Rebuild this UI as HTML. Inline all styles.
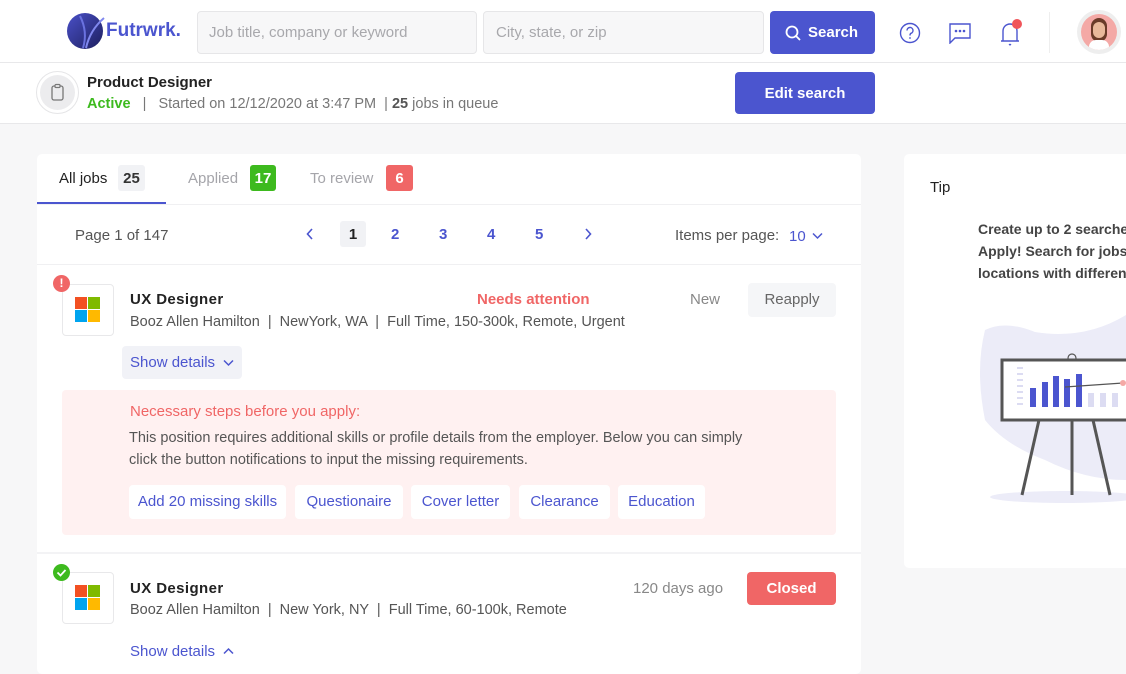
<!DOCTYPE html>
<html><head><meta charset="utf-8"><style>
*{margin:0;padding:0;box-sizing:border-box}
body{width:1126px;height:659px;overflow:hidden;background:#f7f7f8;font-family:"Liberation Sans",sans-serif;position:relative;color:#333}
.a{position:absolute}
.blue{color:#4b55cf}
.t{white-space:nowrap}
</style></head><body>
<div class="a" style="left:0;top:0;width:1126px;height:124px;background:#fff"></div>
<div class="a" style="left:0;top:62px;width:1126px;height:1px;background:#e8e8ea"></div>
<div class="a" style="left:0;top:123px;width:1126px;height:1px;background:#e8e8ea"></div>
<svg class="a" style="left:66px;top:12px" width="40" height="38" viewBox="0 0 40 38"><defs><linearGradient id="g" x1="0" y1="0" x2="1" y2="1"><stop offset="0" stop-color="#4a50c8"/><stop offset="1" stop-color="#1d1f5e"/></linearGradient></defs><circle cx="19" cy="19" r="18" fill="url(#g)"/><path d="M14 4 Q22 20 17 36" stroke="#6a72e0" stroke-width="2" fill="none"/><path d="M38 6 Q24 18 20 36" stroke="#8088ee" stroke-width="2" fill="none"/></svg>
<div class="a t" style="left:106px;top:20px;font-size:19px;font-weight:bold;color:#4b55cf">Futrwrk.</div>
<div class="a" style="left:197px;top:11px;width:280px;height:43px;background:#f7f7f8;border:1px solid #e6e6e8;border-radius:4px"></div>
<div class="a t" style="left:209px;top:24px;font-size:15px;color:#a8a8ac">Job title, company or keyword</div>
<div class="a" style="left:483px;top:11px;width:281px;height:43px;background:#f7f7f8;border:1px solid #e6e6e8;border-radius:4px"></div>
<div class="a t" style="left:496px;top:24px;font-size:15px;color:#a8a8ac">City, state, or zip</div>
<div class="a" style="left:770px;top:11px;width:105px;height:43px;background:#4b55cf;border-radius:4px"></div>
<svg class="a" style="left:785px;top:25px" width="17" height="17" viewBox="0 0 17 17"><circle cx="7" cy="7" r="5.5" stroke="#fff" stroke-width="1.8" fill="none"/><path d="M11 11l4 4" stroke="#fff" stroke-width="1.8"/></svg>
<div class="a t" style="left:808px;top:24px;font-size:15px;color:#fff;font-weight:bold">Search</div>
<svg class="a" style="left:899px;top:22px" width="22" height="22" viewBox="0 0 22 22"><circle cx="11" cy="11" r="9.5" stroke="#4b55cf" stroke-width="1.4" fill="none"/><path d="M8 8.5a3 3 0 1 1 4 2.8c-1 .4-1 1-1 2.2" stroke="#4b55cf" stroke-width="1.4" fill="none"/><circle cx="11" cy="16" r=".9" fill="#4b55cf"/></svg>
<svg class="a" style="left:949px;top:23px" width="22" height="21" viewBox="0 0 22 21"><path d="M1 1h20v14H6l-5 5z" stroke="#4b55cf" stroke-width="1.4" fill="none"/><circle cx="7" cy="8" r="1.3" fill="#4b55cf"/><circle cx="11" cy="8" r="1.3" fill="#4b55cf"/><circle cx="15" cy="8" r="1.3" fill="#4b55cf"/></svg>
<svg class="a" style="left:998px;top:17px" width="26" height="30" viewBox="0 0 26 30"><path d="M3 24h18M5 24V14a7 7 0 0 1 14 0v10" stroke="#4b55cf" stroke-width="1.4" fill="none"/><path d="M11 27l1 1 1-1" stroke="#4b55cf" stroke-width="1.2" fill="none"/><circle cx="19" cy="7" r="5" fill="#f0555a"/></svg>
<div class="a" style="left:1049px;top:12px;width:1px;height:41px;background:#eee"></div>
<div class="a" style="left:1077px;top:10px;width:44px;height:44px;border-radius:50%;background:#eee"></div>
<div class="a" style="left:1081px;top:14px;width:36px;height:36px;border-radius:50%;background:#f4a9a6;overflow:hidden"><div class="a" style="left:10px;top:4px;width:16px;height:24px;border-radius:8px;background:#6a3a28"></div><div class="a" style="left:12px;top:8px;width:12px;height:16px;border-radius:6px;background:#e9b89a"></div><div class="a" style="left:8px;top:26px;width:20px;height:14px;border-radius:8px;background:#fff"></div></div>
<div class="a" style="left:36px;top:71px;width:43px;height:43px;border-radius:50%;border:1px solid #e5e5e7;background:#fff"></div>
<div class="a" style="left:40px;top:75px;width:35px;height:35px;border-radius:50%;background:#ececee"></div>
<svg class="a" style="left:49px;top:83px" width="17" height="19" viewBox="0 0 17 19"><rect x="3" y="3" width="11" height="14" rx="2" stroke="#777" stroke-width="1.3" fill="none"/><rect x="6" y="1.5" width="5" height="3" rx="1" stroke="#777" stroke-width="1.2" fill="#ececee"/></svg>
<div class="a t" style="left:87px;top:74px;font-size:15px;color:#222;font-weight:bold">Product Designer</div>
<div class="a t" style="left:87px;top:96px;font-size:14.5px;color:#777"><span style="color:#3dba1e;font-weight:bold">Active</span>&nbsp;&nbsp; | &nbsp;&nbsp;Started on 12/12/2020 at 3:47 PM&nbsp; | <b style="color:#555">25</b> jobs in queue</div>
<div class="a" style="left:735px;top:72px;width:140px;height:42px;background:#4b55cf;border-radius:4px"></div>
<div class="a t" style="left:735px;top:85px;width:140px;text-align:center;font-size:15px;color:#fff;font-weight:bold">Edit search</div>
<div class="a" style="left:37px;top:154px;width:824px;height:520px;background:#fff;border-radius:5px"></div>
<div class="a t" style="left:59px;top:170px;font-size:15px;color:#222">All jobs</div>
<div class="a" style="left:118px;top:165px;width:27px;height:26px;background:#f1f2f5;border-radius:3px;font-size:15px;font-weight:bold;text-align:center;line-height:28px;color:#333">25</div>
<div class="a" style="left:37px;top:202px;width:129px;height:2px;background:#4b55cf"></div>
<div class="a" style="left:37px;top:204px;width:824px;height:1px;background:#f0f0f2"></div>
<div class="a t" style="left:188px;top:170px;font-size:15px;color:#a5a5aa">Applied</div>
<div class="a" style="left:250px;top:165px;width:26px;height:26px;background:#3dba1e;border-radius:3px;font-size:15px;font-weight:bold;text-align:center;line-height:28px;color:#fff">17</div>
<div class="a t" style="left:310px;top:170px;font-size:15px;color:#a5a5aa">To review</div>
<div class="a" style="left:386px;top:165px;width:27px;height:26px;background:#f06666;border-radius:3px;font-size:15px;font-weight:bold;text-align:center;line-height:28px;color:#fff">6</div>
<div class="a t" style="left:75px;top:227px;font-size:15px;color:#555">Page 1 of 147</div>
<svg class="a" style="left:306px;top:228px" width="8" height="12" viewBox="0 0 8 12"><path d="M6 1L1.5 6 6 11" stroke="#4b55cf" stroke-width="1.6" fill="none"/></svg>
<div class="a" style="left:340px;top:221px;width:26px;height:26px;background:#f1f2f5;border-radius:3px;text-align:center;line-height:27px;font-size:15px;font-weight:bold;color:#222">1</div>
<div class="a t blue" style="left:391px;top:226px;font-size:15px;font-weight:bold">2</div>
<div class="a t blue" style="left:439px;top:226px;font-size:15px;font-weight:bold">3</div>
<div class="a t blue" style="left:487px;top:226px;font-size:15px;font-weight:bold">4</div>
<div class="a t blue" style="left:535px;top:226px;font-size:15px;font-weight:bold">5</div>
<svg class="a" style="left:584px;top:228px" width="8" height="12" viewBox="0 0 8 12"><path d="M2 1l4.5 5L2 11" stroke="#4b55cf" stroke-width="1.6" fill="none"/></svg>
<div class="a t" style="left:675px;top:227px;font-size:15px;color:#555">Items per page:</div>
<div class="a t blue" style="left:789px;top:228px;font-size:15px">10</div>
<svg class="a" style="left:812px;top:232px" width="11" height="8" viewBox="0 0 11 8"><path d="M1 1.5l4.5 4.5 4.5-4.5" stroke="#4b55cf" stroke-width="1.5" fill="none"/></svg>
<div class="a" style="left:37px;top:264px;width:824px;height:1px;background:#f0f0f2"></div>
<div class="a" style="left:62px;top:284px;width:52px;height:52px;border:1px solid #e8e8ea;border-radius:4px;background:#fff"></div>
<div class="a" style="left:75px;top:297px;width:12px;height:12px;background:#f25022"></div><div class="a" style="left:88px;top:297px;width:12px;height:12px;background:#7fba00"></div><div class="a" style="left:75px;top:310px;width:12px;height:12px;background:#00a4ef"></div><div class="a" style="left:88px;top:310px;width:12px;height:12px;background:#ffb900"></div>
<div class="a" style="left:53px;top:275px;width:17px;height:17px;border-radius:50%;background:#f06666;color:#fff;font-size:12px;font-weight:bold;text-align:center;line-height:17px">!</div>
<div class="a t" style="left:130px;top:291px;font-size:15px;color:#222;font-weight:bold;letter-spacing:.4px">UX Designer</div>
<div class="a t" style="left:130px;top:314px;font-size:14.5px;color:#555">Booz Allen Hamilton &nbsp;| &nbsp;NewYork, WA &nbsp;| &nbsp;Full Time, 150-300k, Remote, Urgent</div>
<div class="a t" style="left:477px;top:291px;font-size:15px;color:#f06666;font-weight:bold">Needs attention</div>
<div class="a t" style="left:690px;top:291px;font-size:15px;color:#888">New</div>
<div class="a" style="left:748px;top:283px;width:88px;height:34px;background:#f5f6f8;border-radius:4px;text-align:center;line-height:34px;font-size:15px;color:#666">Reapply</div>
<div class="a" style="left:122px;top:346px;width:120px;height:33px;background:#f1f2f7;border-radius:4px"></div>
<div class="a t blue" style="left:130px;top:354px;font-size:15px">Show details</div>
<svg class="a" style="left:223px;top:359px" width="11" height="8" viewBox="0 0 11 8"><path d="M1 1.5l4.5 4.5 4.5-4.5" stroke="#4b55cf" stroke-width="1.5" fill="none"/></svg>
<div class="a" style="left:62px;top:390px;width:774px;height:145px;background:#fff1f1;border-radius:4px"></div>
<div class="a t" style="left:130px;top:403px;font-size:15px;color:#f06666">Necessary steps before you apply:</div>
<div class="a t" style="left:129px;top:427px;font-size:14.5px;color:#555;line-height:22px">This position requires additional skills or profile details from the employer. Below you can simply<br>click the button notifications to input the missing requirements.</div>
<div class="a t blue" style="left:129px;top:485px;width:157px;height:34px;background:#fff;border-radius:4px;text-align:center;line-height:34px;font-size:15px">Add 20 missing skills</div>
<div class="a t blue" style="left:295px;top:485px;width:108px;height:34px;background:#fff;border-radius:4px;text-align:center;line-height:34px;font-size:15px">Questionaire</div>
<div class="a t blue" style="left:411px;top:485px;width:99px;height:34px;background:#fff;border-radius:4px;text-align:center;line-height:34px;font-size:15px">Cover letter</div>
<div class="a t blue" style="left:519px;top:485px;width:91px;height:34px;background:#fff;border-radius:4px;text-align:center;line-height:34px;font-size:15px">Clearance</div>
<div class="a t blue" style="left:618px;top:485px;width:87px;height:34px;background:#fff;border-radius:4px;text-align:center;line-height:34px;font-size:15px">Education</div>
<div class="a" style="left:37px;top:552px;width:824px;height:2px;background:#f3f3f5"></div>
<div class="a" style="left:62px;top:572px;width:52px;height:52px;border:1px solid #e8e8ea;border-radius:4px;background:#fff"></div>
<div class="a" style="left:75px;top:585px;width:12px;height:12px;background:#f25022"></div><div class="a" style="left:88px;top:585px;width:12px;height:12px;background:#7fba00"></div><div class="a" style="left:75px;top:598px;width:12px;height:12px;background:#00a4ef"></div><div class="a" style="left:88px;top:598px;width:12px;height:12px;background:#ffb900"></div>
<svg class="a" style="left:53px;top:564px" width="17" height="17" viewBox="0 0 17 17"><circle cx="8.5" cy="8.5" r="8.5" fill="#3dba1e"/><path d="M4.5 8.5l3 3 5-5.5" stroke="#fff" stroke-width="1.8" fill="none"/></svg>
<div class="a t" style="left:130px;top:580px;font-size:15px;color:#222;font-weight:bold;letter-spacing:.4px">UX Designer</div>
<div class="a t" style="left:130px;top:602px;font-size:14.5px;color:#555">Booz Allen Hamilton &nbsp;| &nbsp;New York, NY &nbsp;| &nbsp;Full Time, 60-100k, Remote</div>
<div class="a t" style="left:633px;top:580px;font-size:15px;color:#888">120 days ago</div>
<div class="a" style="left:747px;top:572px;width:89px;height:33px;background:#f06666;border-radius:4px;text-align:center;line-height:33px;font-size:15px;color:#fff;font-weight:bold">Closed</div>
<div class="a t blue" style="left:130px;top:643px;font-size:15px">Show details</div>
<svg class="a" style="left:223px;top:647px" width="11" height="8" viewBox="0 0 11 8"><path d="M1 6.5l4.5-4.5 4.5 4.5" stroke="#4b55cf" stroke-width="1.5" fill="none"/></svg>
<div class="a" style="left:904px;top:154px;width:240px;height:414px;background:#fff;border-radius:5px"></div>
<div class="a t" style="left:930px;top:179px;font-size:15px;color:#222">Tip</div>
<div class="a t" style="left:978px;top:218px;font-size:14px;color:#444;line-height:22px;font-weight:bold">Create up to 2 searches<br>Apply! Search for jobs<br>locations with different</div>
<svg class="a" style="left:975px;top:310px" width="151" height="200" viewBox="0 0 151 200"><path d="M10 20 Q30 10 60 22 Q110 30 151 5 V170 Q110 170 70 150 Q30 135 10 110 Q0 60 10 20Z" fill="#ececf8"/><ellipse cx="90" cy="187" rx="75" ry="6" fill="#ececf8"/><circle cx="97" cy="48" r="4" stroke="#555" fill="none" stroke-width="1.2"/><rect x="27" y="50" width="130" height="60" fill="#fff" stroke="#555" stroke-width="3"/><g fill="#dcdcf2"><rect x="42" y="57" width="6" height="2"/><rect x="42" y="63" width="6" height="2"/><rect x="42" y="69" width="6" height="2"/><rect x="42" y="75" width="6" height="2"/><rect x="42" y="81" width="6" height="2"/><rect x="42" y="87" width="6" height="2"/><rect x="42" y="93" width="6" height="2"/><rect x="113" y="83" width="6" height="14"/><rect x="125" y="83" width="6" height="14"/><rect x="137" y="83" width="6" height="14"/></g><g fill="#4b55cf"><rect x="55" y="78" width="6" height="19"/><rect x="67" y="72" width="6" height="25"/><rect x="78" y="66" width="6" height="31"/><rect x="89" y="69" width="6" height="28"/><rect x="101" y="64" width="6" height="33"/></g><path d="M90 77 L148 73" stroke="#555" stroke-width="1.2"/><circle cx="148" cy="73" r="3" fill="#f4a9a6"/><path d="M64 110 L47 185 M97 110 V185 M118 110 L135 185" stroke="#555" stroke-width="3"/></svg>
</body></html>
